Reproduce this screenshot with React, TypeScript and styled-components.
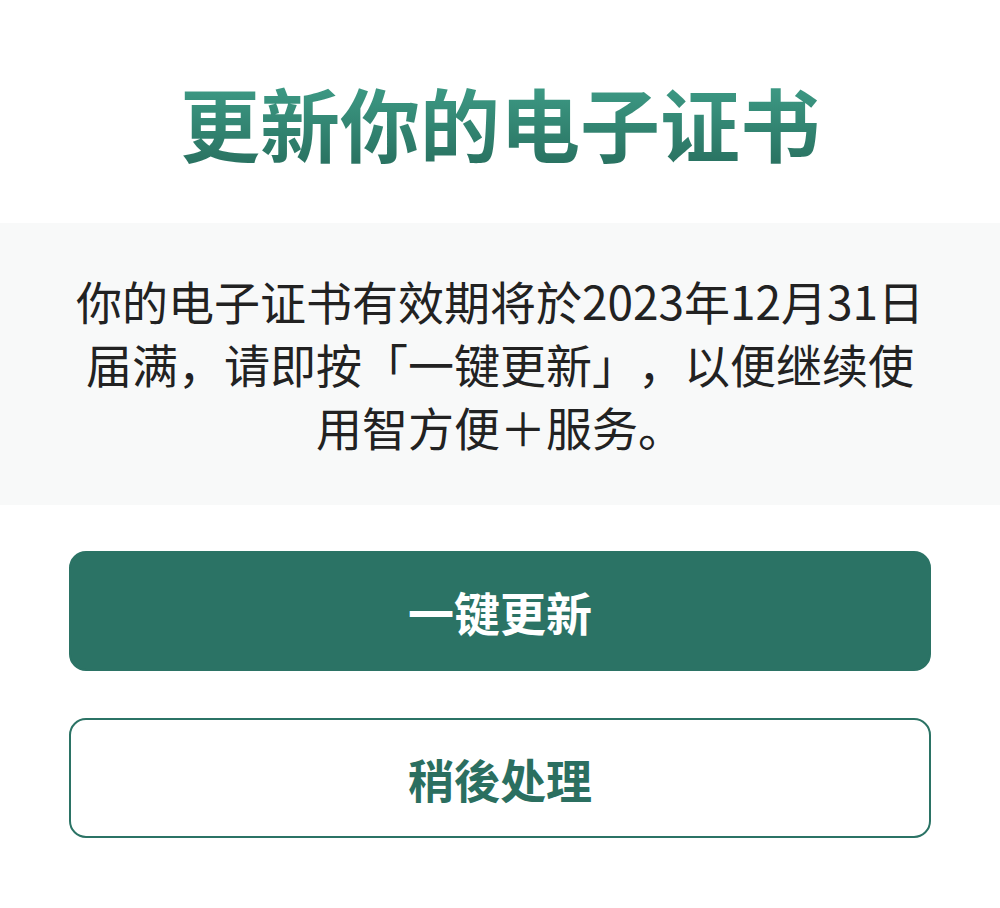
import React from "react";
import styled, { createGlobalStyle } from "styled-components";

const Global = createGlobalStyle`
  html, body { margin: 0; padding: 0; background: #ffffff; }
  body {
    font-family: "Noto Sans CJK SC", "Noto Sans CJK TC", "Noto Sans", sans-serif;
    text-spacing-trim: space-all;
  }
`;

const Page = styled.div`
  display: flex;
  flex-direction: column;
  align-items: stretch;
  padding-top: 73px;
`;

const Title = styled.h1`
  margin: 0;
  font-size: 80px;
  line-height: 96px;
  font-weight: 700;
  text-align: center;
  letter-spacing: 0;
  background: linear-gradient(180deg, #40a08a 0%, #28705f 100%);
  -webkit-background-clip: text;
  background-clip: text;
  color: transparent;
`;

const Notice = styled.section`
  margin-top: 54px;
  background: #f8f9f9;
  height: 282px;
  box-sizing: border-box;
  padding: 46px 40px 0;
  display: flex;
  flex-direction: column;
  align-items: center;
`;

const Line = styled.p`
  margin: 0;
  font-size: 46px;
  line-height: 63px;
  color: #222222;
  text-align: center;
  white-space: nowrap;
  text-spacing-trim: space-all;
  font-feature-settings: "halt" 0, "chws" 0;
`;

const Actions = styled.div`
  display: flex;
  flex-direction: column;
  gap: 47px;
  padding: 46px 69px 0 69px;
`;

const Button = styled.button<{ $variant: "primary" | "outline" }>`
  height: 120px;
  border-radius: 17px;
  box-sizing: border-box;
  font-family: inherit;
  font-size: 46px;
  font-weight: 700;
  cursor: pointer;
  display: flex;
  align-items: center;
  justify-content: center;
  background: ${(p) => (p.$variant === "primary" ? "#2b7365" : "#ffffff")};
  color: ${(p) => (p.$variant === "primary" ? "#ffffff" : "#2b6f60")};
  border: 2px solid #2b7365;
`;

export default function App() {
  return (
    <>
      <Global />
      <Page>
        <Title>更新你的电子证书</Title>
        <Notice>
          <Line>你的电子证书有效期将於2023年12月31日</Line>
          <Line>届满，请即按「一键更新」，以便继续使</Line>
          <Line>用智方便＋服务。</Line>
        </Notice>
        <Actions>
          <Button $variant="primary">一键更新</Button>
          <Button $variant="outline">稍後处理</Button>
        </Actions>
      </Page>
    </>
  );
}
